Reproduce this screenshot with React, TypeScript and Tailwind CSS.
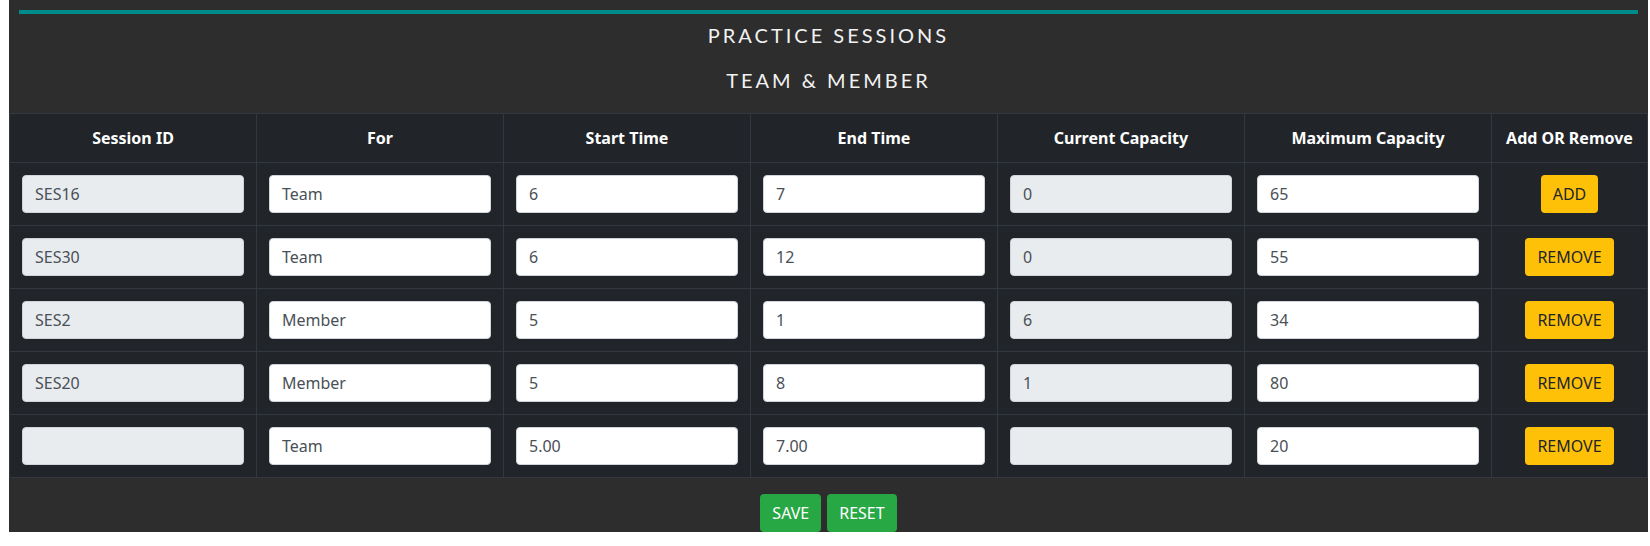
const sessions = [
  { id: "SES16", forWho: "Team", start: "6", end: "7", current: "0", max: "65", action: "ADD" },
  { id: "SES30", forWho: "Team", start: "6", end: "12", current: "0", max: "55", action: "REMOVE" },
  { id: "SES2", forWho: "Member", start: "5", end: "1", current: "6", max: "34", action: "REMOVE" },
  { id: "SES20", forWho: "Member", start: "5", end: "8", current: "1", max: "80", action: "REMOVE" },
  { id: "", forWho: "Team", start: "5.00", end: "7.00", current: "", max: "20", action: "REMOVE" },
]

const headers = ["Session ID", "For", "Start Time", "End Time", "Current Capacity", "Maximum Capacity", "Add OR Remove"]

function Field({ value, readOnly }: { value: string; readOnly?: boolean }) {
  return (
    <input
      readOnly={readOnly}
      defaultValue={value}
      className={`block h-[38px] w-full rounded border border-[#ced4da] px-3 text-base leading-6 text-[#495057] outline-none ${
        readOnly ? "bg-[#e9ecef]" : "bg-white"
      }`}
    />
  )
}

export default function App() {
  return (
    <div className="min-h-screen bg-white font-['Noto_Sans',sans-serif]">
      <div className="ml-[9px] w-[1639px] bg-[#2d2d2d]">
        {/* teal accent */}
        <div className="px-[10px] pt-[10px]">
          <div className="h-1 bg-[#008b8b]" />
        </div>

        <h2 className="mt-[6px] h-[30px] text-center font-['Lato',sans-serif] text-[20px] leading-[30px] tracking-[3px] text-[#f2f2f2]">
          PRACTICE SESSIONS
        </h2>
        <h3 className="mt-[15px] mb-[18px] h-[30px] text-center font-['Lato',sans-serif] text-[20px] leading-[30px] tracking-[3px] text-[#f2f2f2]">
          TEAM &amp; MEMBER
        </h3>

        <table className="w-full table-fixed border-collapse bg-[#212529] text-base leading-6">
          <colgroup>
            <col />
            <col />
            <col />
            <col />
            <col />
            <col />
            <col className="w-[156px]" />
          </colgroup>
          <thead>
            <tr>
              {headers.map((h) => (
                <th key={h} className="whitespace-nowrap border border-[#32383e] p-3 text-center font-bold text-white">
                  {h}
                </th>
              ))}
            </tr>
          </thead>
          <tbody>
            {sessions.map((s, i) => (
              <tr key={i}>
                <td className="border border-[#32383e] p-3">
                  <Field value={s.id} readOnly />
                </td>
                <td className="border border-[#32383e] p-3">
                  <Field value={s.forWho} />
                </td>
                <td className="border border-[#32383e] p-3">
                  <Field value={s.start} />
                </td>
                <td className="border border-[#32383e] p-3">
                  <Field value={s.end} />
                </td>
                <td className="border border-[#32383e] p-3">
                  <Field value={s.current} readOnly />
                </td>
                <td className="border border-[#32383e] p-3">
                  <Field value={s.max} />
                </td>
                <td className="border border-[#32383e] p-3 text-center">
                  <button className="h-[38px] rounded bg-[#ffc107] px-3 text-base leading-6 text-[#212529]">
                    {s.action}
                  </button>
                </td>
              </tr>
            ))}
          </tbody>
        </table>

        <div className="flex justify-center gap-[6px] pt-4">
          <button className="h-[38px] rounded bg-[#28a745] px-3 text-base leading-6 text-white">SAVE</button>
          <button className="h-[38px] rounded bg-[#28a745] px-3 text-base leading-6 text-white">RESET</button>
        </div>
      </div>
    </div>
  )
}
